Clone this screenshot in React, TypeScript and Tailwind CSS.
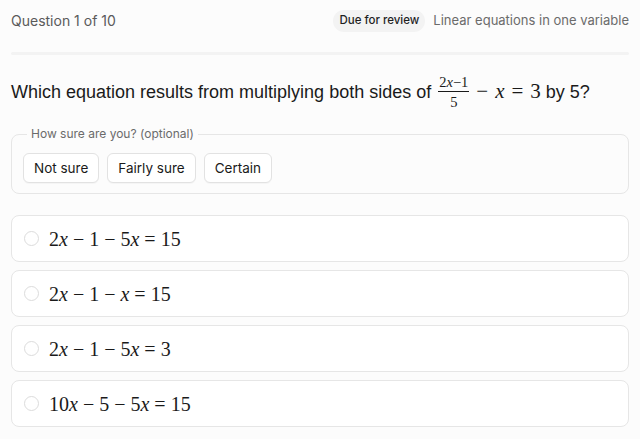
import React from 'react';

const V = ({ children }: { children: React.ReactNode }) => <span className="italic">{children}</span>;
const Op = ({ children }: { children: React.ReactNode }) => <span className="mx-[5px]">{children}</span>;
const QOp = ({ children }: { children: React.ReactNode }) => <span className="mx-[7px]">{children}</span>;

const options: React.ReactNode[] = [
    <>2<V>x</V><Op>−</Op>1<Op>−</Op>5<V>x</V><Op>=</Op>15</>,
    <>2<V>x</V><Op>−</Op>1<Op>−</Op><V>x</V><Op>=</Op>15</>,
    <>2<V>x</V><Op>−</Op>1<Op>−</Op>5<V>x</V><Op>=</Op>3</>,
    <>10<V>x</V><Op>−</Op>5<Op>−</Op>5<V>x</V><Op>=</Op>15</>,
];

const App = () => {
    return (
        <div className="min-h-[439px] bg-[#fcfcfc] px-[11px] pt-[11px] font-['Inter',sans-serif] text-[#1a1a1a]">
            {/* Header */}
            <div className="flex items-center justify-between h-[20px]">
                <span className="text-sm text-[#5a5a5a]">Question 1 of 10</span>
                <div className="flex items-center gap-[8px]">
                    <span className="rounded-full bg-[#f3f3f3] px-[6px] py-[2px] text-[11.5px] font-medium text-[#1f1f1f]">Due for review</span>
                    <span className="text-[13px] text-[#6b6b6b]">Linear equations in one variable</span>
                </div>
            </div>
            <div className="mt-[21px] h-[3px] rounded-full bg-[#f3f3f3]" />

            {/* Question */}
            <div className="mt-[17px] flex h-[40px] items-center font-['Liberation_Sans',sans-serif] text-[18px]">
                <span>Which equation results from multiplying both sides of</span>
                <span className="ml-[7px] inline-flex items-center font-['Liberation_Serif',serif] text-[21px]">
                    <span className="inline-flex flex-col items-center text-[14.5px] leading-[14px]">
                        <span className="border-b border-[#1a1a1a] px-[1px] pb-[2px]">2<V>x</V>−1</span>
                        <span className="pt-[3px]">5</span>
                    </span>
                    <QOp>−</QOp>
                    <V>x</V>
                    <QOp>=</QOp>
                    <span>3</span>
                </span>
                <span className="ml-[5px]">by 5?</span>
            </div>

            {/* Confidence */}
            <fieldset className="mt-[14px] rounded-lg border border-[#e6e6e6] bg-[#fcfcfc] px-[11px] pb-[10px] pt-[11px]">
                <legend className="ml-[4px] px-[4px] text-xs text-[#6b6b6b]">How sure are you? (optional)</legend>
                <div className="flex gap-[8px]">
                    {['Not sure', 'Fairly sure', 'Certain'].map((label) => (
                        <button
                            key={label}
                            className="h-[30px] rounded-md border border-[#e2e2e2] bg-white px-[10px] text-[13.5px] text-[#1a1a1a] shadow-[0_1px_1px_rgba(0,0,0,0.03)]"
                        >
                            {label}
                        </button>
                    ))}
                </div>
            </fieldset>

            {/* Options */}
            <div className="mt-[21px] flex flex-col gap-[8px]">
                {options.map((opt, i) => (
                    <label key={i} className="flex h-[47px] items-center gap-[10px] rounded-lg border border-[#e6e6e6] bg-white px-[12px]">
                        <span className="h-[15px] w-[15px] rounded-full border border-[#dcdcdc] bg-white" />
                        <span className="font-['Liberation_Serif',serif] text-[20px]">{opt}</span>
                    </label>
                ))}
            </div>
        </div>
    );
};

export default App;
